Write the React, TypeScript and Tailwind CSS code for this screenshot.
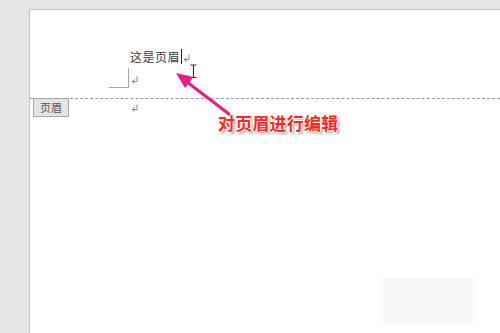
import React from 'react';

const cjk = { fontFamily: '"Noto Sans CJK SC", "Noto Sans", sans-serif' };

// Word-style paragraph mark
const ReturnMark = ({ className = '' }: { className?: string }) => (
  <svg width="7" height="8" viewBox="0 0 7 8" className={className}>
    <path d="M6 0.5 V5.5 H1.5" stroke="#8a8a8a" strokeWidth="1" fill="none" />
    <path d="M3.5 3.5 L1 5.5 L3.5 7.5" stroke="#8a8a8a" strokeWidth="1" fill="none" />
  </svg>
);

const App: React.FC = () => {
  return (
    <div className="relative w-[500px] h-[333px] overflow-hidden bg-[#e6e6e6]" style={cjk}>
      <div className="ml-[29px] mt-[9px] h-[324px] bg-white border-l border-t border-[#c4c4c4] flex flex-col">
        {/* header text line */}
        <div className="flex items-center pl-[100px] pt-[38px] h-[55px]">
          <span className="text-[12px] leading-[16px] text-[#3a3a3a] tracking-[0.5px]">这是页眉</span>
          <span className="ml-[1px] w-[1px] h-[15px] bg-[#222]" />
          <ReturnMark className="ml-[1px] mt-[2px]" />
        </div>
        {/* margin corner mark */}
        <div className="flex items-end h-[24px] -mt-[1px]">
          <div className="ml-[79px] w-[20px] h-[20px] border-r border-b border-[#a8a8a8]" />
          <ReturnMark className="ml-[2px] mb-[4px]" />
        </div>
        {/* header separator */}
        <div className="mt-[10px] border-t border-dashed border-[#9a9a9a]" />
        <div className="flex items-start">
          <div className="ml-[3px] -mt-[1px] w-[36px] h-[19px] flex items-center justify-center bg-[#e4e4e4] border border-[#a6a6a6] text-[11px] text-[#555]">
            页眉
          </div>
          <ReturnMark className="ml-[62px] mt-[5px]" />
        </div>
      </div>

      {/* I-beam cursor */}
      <svg className="absolute left-[189px] top-[64px]" width="9" height="15" viewBox="0 0 9 15">
        <path d="M1.5 1 H7.5 M4.5 1 V13.5 M1.5 13.5 H7.5" stroke="#333" strokeWidth="1.2" fill="none" />
      </svg>

      {/* annotation arrow */}
      <svg className="absolute left-0 top-0" width="500" height="333" viewBox="0 0 500 333">
        <line x1="229" y1="114" x2="187" y2="82" stroke="#ec1a85" strokeWidth="3" strokeLinecap="round" />
        <polygon points="176,73 193.5,77 185,88" fill="#ec1a85" />
      </svg>

      {/* annotation label */}
      <div className="absolute left-[218px] top-[112px] text-[17px] leading-[22px] font-bold text-[#ff2626] tracking-[0.2px] [text-shadow:1px_0_0_#fff,-1px_0_0_#fff,0_1px_0_#fff,0_-1px_0_#fff,2px_2px_3px_rgba(0,0,0,0.45)]">
        对页眉进行编辑
      </div>

      {/* faint block bottom right */}
      <div className="absolute left-[383px] top-[278px] w-[90px] h-[45px] bg-[#f8f8f8]" />
    </div>
  );
};

export default App;
